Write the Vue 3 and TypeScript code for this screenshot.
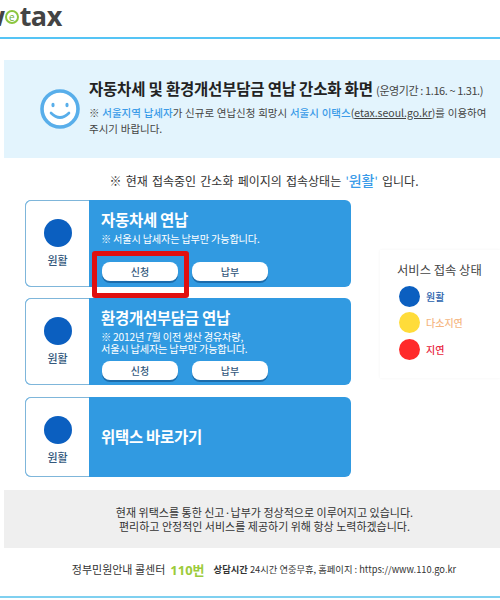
<template>
  <div class="page">
    <header class="top">
      <div class="logo"><span class="logo-w">w</span><span class="logo-e">e</span><span>tax</span></div>
    </header>

    <section class="hero">
      <svg class="smile" width="40" height="40" viewBox="0 0 40 40">
        <circle cx="20" cy="20" r="18" fill="#fff" stroke="#58aeea" stroke-width="3.6" />
        <ellipse cx="13" cy="16" rx="1.6" ry="2.2" fill="#58aeea" />
        <ellipse cx="27" cy="16" rx="1.6" ry="2.2" fill="#58aeea" />
        <path d="M11 24 Q20 33 29 24" fill="none" stroke="#58aeea" stroke-width="2.6" stroke-linecap="round" />
      </svg>
      <div class="hero-text">
        <p class="hero-title">자동차세 및 환경개선부담금 연납 간소화 화면 <span class="period">(운영기간 : 1.16. ~ 1.31.)</span></p>
        <p class="hero-desc">※ <b>서울지역 납세자</b>가 신규로 연납신청 희망시 <b>서울시 이택스</b>(<u>etax.seoul.go.kr</u>)를 이용하여 주시기 바랍니다.</p>
      </div>
    </section>

    <p class="status-line">※ 현재 접속중인 간소화 페이지의 접속상태는 <span class="ok">'<em>원활</em>'</span> 입니다.</p>

    <div class="middle">
      <div class="cards">
        <article v-for="c in cards" :key="c.title" class="card" :class="c.kind">
          <div class="state">
            <span class="dot"></span>
            <span class="state-label">원활</span>
          </div>
          <div class="body">
            <h2>{{ c.title }}</h2>
            <p v-if="c.notes.length" class="notes"><span v-for="n in c.notes" :key="n">{{ n }}</span></p>
            <div v-if="c.notes.length" class="btns">
              <button class="btn">신청</button>
              <button class="btn">납부</button>
            </div>
          </div>
        </article>
        <div class="marker"></div>
      </div>

      <aside class="legend">
        <p class="legend-title">서비스 접속 상태</p>
        <div v-for="l in legend" :key="l.label" class="legend-row">
          <span class="legend-dot" :style="{ background: l.dot }"></span>
          <span class="legend-label" :style="{ color: l.text }">{{ l.label }}</span>
        </div>
      </aside>
    </div>

    <section class="notice">
      <p>현재 위택스를 통한 신고·납부가 정상적으로 이루어지고 있습니다.</p>
      <p>편리하고 안정적인 서비스를 제공하기 위해 항상 노력하겠습니다.</p>
    </section>

    <footer class="foot">
      <span>정부민원안내 콜센터</span>
      <strong class="num">110번</strong>
      <span class="hours"><b>상담시간</b> 24시간 연중무휴, 홈페이지 : https://www.110.go.kr</span>
    </footer>
  </div>
</template>

<script setup lang="ts">
const cards = [
  { title: '자동차세 연납', kind: 'first', notes: ['※ 서울시 납세자는 납부만 가능합니다.'] },
  { title: '환경개선부담금 연납', kind: 'second', notes: ['※ 2012년 7월 이전 생산 경유차량,', '서울시 납세자는 납부만 가능합니다.'] },
  { title: '위택스 바로가기', kind: 'third', notes: [] as string[] },
]

const legend = [
  { label: '원활', dot: '#0b5fc0', text: '#2a62ad' },
  { label: '다소지연', dot: '#ffdc3a', text: '#f5b783' },
  { label: '지연', dot: '#ff2a2a', text: '#e8243c' },
]
</script>

<style scoped>
.page {
  width: 500px;
  height: 600px;
  overflow: hidden;
  font-family: "Noto Sans CJK KR", "Noto Sans", sans-serif;
  color: #333;
  background: #fff;
}

.top {
  height: 39px;
  box-sizing: border-box;
  border-bottom: 2px solid #55c4f5;
  margin-bottom: 21px;
  overflow: hidden;
}

.logo {
  display: flex;
  align-items: center;
  height: 32px;
  margin-left: -18px;
  font-family: "Open Sans", sans-serif;
  font-size: 27px;
  font-weight: 700;
  line-height: 32px;
  color: #444;
  letter-spacing: -0.5px;
}

.logo-e {
  display: inline-flex;
  align-items: center;
  justify-content: center;
  box-sizing: border-box;
  width: 14px;
  height: 14px;
  margin: 2px 1px 0 0;
  border: 2px solid #8cc63f;
  border-radius: 50%;
  font-size: 10px;
  font-weight: 400;
  line-height: 1;
  color: #6fae2e;
}

.hero {
  display: flex;
  align-items: center;
  height: 98px;
  margin-left: 4px;
  box-sizing: border-box;
  padding-left: 36px;
  gap: 9px;
  background: #e3f4fd;
}

.smile {
  flex: none;
}

.hero-text {
  width: 404px;
  margin-top: -4px;
}

.hero-title {
  margin: 0 0 5px;
  font-size: 15.5px;
  font-weight: 700;
  line-height: 20px;
  color: #222;
  letter-spacing: -0.2px;
  white-space: nowrap;
}

.period {
  font-size: 11px;
  font-weight: 400;
  color: #444;
  letter-spacing: -0.4px;
}

.hero-desc {
  margin: 0;
  font-size: 10.5px;
  line-height: 16px;
  color: #444;
  word-spacing: 0.4px;
}

.hero-desc b {
  font-weight: 500;
  color: #3a9be8;
}

.status-line {
  margin: 13px 0 11px;
  padding-left: 28px;
  height: 18px;
  font-size: 12px;
  line-height: 18px;
  text-align: center;
  color: #333;
  word-spacing: 1.5px;
}

.ok {
  color: #3a9be8;
}

.ok em {
  font-style: normal;
  font-size: 14px;
  font-weight: 500;
}

.middle {
  display: flex;
  align-items: flex-start;
  padding-left: 25px;
}

.cards {
  position: relative;
  display: flex;
  flex-direction: column;
  gap: 11px;
  width: 326px;
}

.card {
  display: flex;
  height: 87px;
  border-radius: 6px;
  overflow: hidden;
  box-sizing: border-box;
  background: #319ae1;
}

.card.third {
  height: 80px;
  margin-top: 1px;
}

.state {
  flex: none;
  display: flex;
  flex-direction: column;
  align-items: center;
  box-sizing: border-box;
  width: 64px;
  padding-top: 18px;
  border: 1px solid #7fb6da;
  border-right: none;
  border-radius: 6px 0 0 6px;
  background: #fff;
}

.dot {
  width: 28px;
  height: 28px;
  border-radius: 50%;
  background: #0b5fc0;
}

.state-label {
  margin-top: 6px;
  font-size: 11px;
  font-weight: 500;
  line-height: 14px;
  color: #33587c;
}

.body {
  flex: 1;
  padding: 8px 0 0 12px;
  color: #fff;
}

.third .body {
  display: flex;
  align-items: center;
  padding-top: 0;
  padding-bottom: 3px;
}

h2 {
  margin: 0;
  font-size: 15.5px;
  font-weight: 700;
  line-height: 22px;
  letter-spacing: -0.3px;
}

.notes {
  display: flex;
  flex-direction: column;
  margin: 2px 0 0;
  font-size: 10.2px;
  line-height: 13px;
  letter-spacing: -0.2px;
}

.second .notes {
  margin-top: 3px;
  line-height: 12px;
}

.btns {
  display: flex;
  gap: 14px;
  margin: 17px 0 0 1px;
}

.second .btns {
  margin-top: 6px;
}

.btn {
  width: 76px;
  height: 19px;
  padding: 0;
  border: none;
  border-radius: 8px;
  font-family: inherit;
  font-size: 10px;
  font-weight: 500;
  color: #33587c;
  background: #fff;
  box-shadow: 0 2px 0 #1c6cab;
}

.marker {
  position: absolute;
  left: 67px;
  top: 51px;
  width: 87px;
  height: 37px;
  border: 5px solid #e01010;
  border-radius: 3px;
}

.legend {
  display: flex;
  flex-direction: column;
  box-sizing: border-box;
  width: 120px;
  height: 128px;
  margin: 50px 0 0 29px;
  padding: 12px 0 0 17px;
  background: #fff;
  box-shadow: 0 0 3px rgba(0, 0, 0, 0.05);
}

.legend-title {
  margin: 0 0 5px;
  font-size: 12.3px;
  line-height: 16px;
  color: #444;
  white-space: nowrap;
}

.legend-row {
  display: flex;
  align-items: center;
  gap: 6px;
  margin-left: 2px;
  height: 26.5px;
  font-size: 10px;
  font-weight: 500;
}

.legend-dot {
  width: 21px;
  height: 21px;
  border-radius: 50%;
}

.notice {
  display: flex;
  flex-direction: column;
  justify-content: center;
  box-sizing: border-box;
  height: 58px;
  margin: 13px 0 0 4px;
  padding-left: 25px;
  background: #efefef;
  text-align: center;
  font-size: 11px;
  line-height: 14.5px;
  color: #333;
}

.notice p {
  margin: 0;
}

.foot {
  display: flex;
  align-items: center;
  justify-content: center;
  box-sizing: border-box;
  height: 50px;
  padding: 0 0 6px 28px;
  border-bottom: 2px solid #7fd0f0;
  font-size: 11px;
  color: #333;
}

.num {
  margin: 0 9px 0 5px;
  font-family: "Open Sans", "Noto Sans CJK KR", sans-serif;
  font-size: 13px;
  font-weight: 700;
  color: #9ccb3b;
}

.hours {
  font-size: 9.3px;
  white-space: nowrap;
}

.hours b {
  font-weight: 700;
}
</style>

<style>
html, body {
  margin: 0;
  background: #fff;
}
</style>
